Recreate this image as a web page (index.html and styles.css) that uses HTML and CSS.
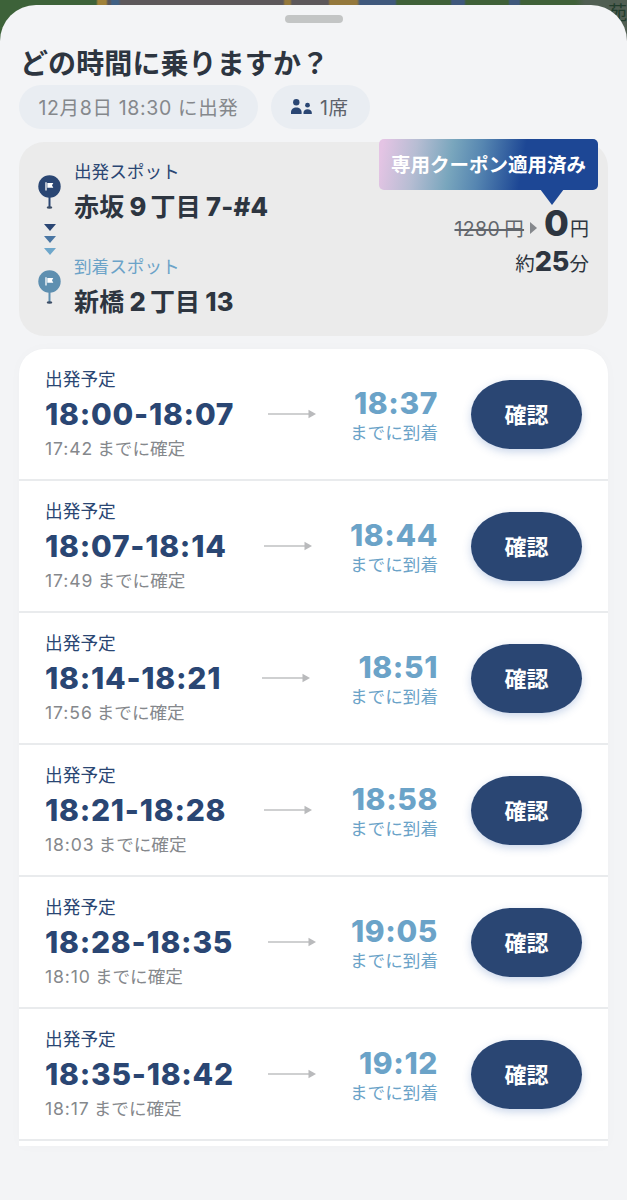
FILE: index.html
```html
<!DOCTYPE html>
<html lang="ja">
<head>
    <meta charset="UTF-8">
    <meta name="viewport" content="width=device-width, initial-scale=1.0">
    <title>どの時間に乗りますか?</title>
    <link rel="stylesheet" href="styles.css">
</head>
<body>
    <!-- Shared icons -->
    <svg class="icon-defs" width="0" height="0">
        <symbol id="arrow" viewBox="0 0 48 10">
            <path d="M0 5h42" stroke="#bfc0c2" stroke-width="1.6"/>
            <path d="M40.500 0.700L48 5l-7.500 4.300z" fill="#b9babc"/>
        </symbol>
        <symbol id="spot" viewBox="0 0 23 35">
            <path d="M11.500 20v12.500" stroke="currentColor" stroke-width="2"/>
            <ellipse cx="11.500" cy="32.500" rx="2.800" ry="1.300" fill="#3c4d66"/>
            <circle cx="11.500" cy="11.500" r="11.200" fill="currentColor"/>
            <path d="M8 7.300v8.200" stroke="#fff" stroke-width="1.300"/>
            <path d="M9.300 8h6l-1.300 2.300 1.300 2.400h-6z" fill="#fff"/>
        </symbol>
    </svg>

    <div class="map"><span class="map-label">苑</span></div>

    <div class="sheet">
        <div class="handle"></div>
        <h1>どの時間に乗りますか？</h1>

        <div class="conditions">
            <div class="pill pill-date">12月8日 18:30 に出発</div>
            <div class="pill pill-seat">
                <svg width="22" height="15" viewBox="0 0 22 15" fill="#2a4673">
                    <circle cx="5.300" cy="3.200" r="3.200"/>
                    <path d="M0 15v-1.800C0 10 2.300 8.400 5.300 8.400s5.300 1.600 5.300 4.800V15z"/>
                    <circle cx="16.500" cy="6.200" r="2.400"/>
                    <path d="M12.500 15v-1.300c0-2.200 1.600-3.500 4-3.500s4.300 1.300 4.300 3.500V15z"/>
                </svg>
                <span>1席</span>
            </div>
        </div>

        <!-- Route summary -->
        <div class="route">
            <div class="route-line">
                <svg class="spot-from" width="23" height="35"><use href="#spot"/></svg>
                <svg class="chevrons" width="12" height="32" viewBox="0 0 12 32">
                    <path d="M0 0h12L6 7z" fill="#2a4673"/>
                    <path d="M0 12h12l-6 7z" fill="#4a76a3"/>
                    <path d="M0 24h12l-6 7z" fill="#6ea7cb"/>
                </svg>
                <svg class="spot-to" width="23" height="35"><use href="#spot"/></svg>
            </div>
            <div class="route-spots">
                <div class="spot-label">出発スポット</div>
                <div class="spot-name">赤坂<span class="num">9</span>丁目<span class="num last">7-#4</span></div>
                <div class="spot-label to">到着スポット</div>
                <div class="spot-name">新橋<span class="num">2</span>丁目<span class="num last">13</span></div>
            </div>
            <div class="fare">
                <div class="price">
                    <span class="old-price">1280 円</span>
                    <svg width="7" height="12" viewBox="0 0 7 12"><path d="M0 0l7 6-7 6z" fill="#85888c"/></svg>
                    <span class="new-price">0</span><span class="unit">円</span>
                </div>
                <div class="duration">約<b>25</b>分</div>
            </div>
            <div class="coupon">専用クーポン適用済み</div>
        </div>

        <!-- Departure list -->
        <div class="trips">
            <div class="trip">
                <div class="depart">
                    <div class="depart-label">出発予定</div>
                    <div class="depart-time">18:00-18:07</div>
                    <div class="depart-note"><span>17:42</span>までに確定</div>
                </div>
                <div class="arrow"><svg width="48" height="10"><use href="#arrow"/></svg></div>
                <div class="arrive">
                    <div class="arrive-time">18:37</div>
                    <div class="arrive-note">までに到着</div>
                </div>
                <button class="confirm">確認</button>
            </div>
            <div class="trip">
                <div class="depart">
                    <div class="depart-label">出発予定</div>
                    <div class="depart-time">18:07-18:14</div>
                    <div class="depart-note"><span>17:49</span>までに確定</div>
                </div>
                <div class="arrow"><svg width="48" height="10"><use href="#arrow"/></svg></div>
                <div class="arrive">
                    <div class="arrive-time">18:44</div>
                    <div class="arrive-note">までに到着</div>
                </div>
                <button class="confirm">確認</button>
            </div>
            <div class="trip">
                <div class="depart">
                    <div class="depart-label">出発予定</div>
                    <div class="depart-time">18:14-18:21</div>
                    <div class="depart-note"><span>17:56</span>までに確定</div>
                </div>
                <div class="arrow"><svg width="48" height="10"><use href="#arrow"/></svg></div>
                <div class="arrive">
                    <div class="arrive-time">18:51</div>
                    <div class="arrive-note">までに到着</div>
                </div>
                <button class="confirm">確認</button>
            </div>
            <div class="trip">
                <div class="depart">
                    <div class="depart-label">出発予定</div>
                    <div class="depart-time">18:21-18:28</div>
                    <div class="depart-note"><span>18:03</span>までに確定</div>
                </div>
                <div class="arrow"><svg width="48" height="10"><use href="#arrow"/></svg></div>
                <div class="arrive">
                    <div class="arrive-time">18:58</div>
                    <div class="arrive-note">までに到着</div>
                </div>
                <button class="confirm">確認</button>
            </div>
            <div class="trip">
                <div class="depart">
                    <div class="depart-label">出発予定</div>
                    <div class="depart-time">18:28-18:35</div>
                    <div class="depart-note"><span>18:10</span>までに確定</div>
                </div>
                <div class="arrow"><svg width="48" height="10"><use href="#arrow"/></svg></div>
                <div class="arrive">
                    <div class="arrive-time">19:05</div>
                    <div class="arrive-note">までに到着</div>
                </div>
                <button class="confirm">確認</button>
            </div>
            <div class="trip">
                <div class="depart">
                    <div class="depart-label">出発予定</div>
                    <div class="depart-time">18:35-18:42</div>
                    <div class="depart-note"><span>18:17</span>までに確定</div>
                </div>
                <div class="arrow"><svg width="48" height="10"><use href="#arrow"/></svg></div>
                <div class="arrive">
                    <div class="arrive-time">19:12</div>
                    <div class="arrive-note">までに到着</div>
                </div>
                <button class="confirm">確認</button>
            </div>
        </div>
    </div>
</body>
</html>
```
FILE: styles.css
```css
:root {
    --navy: #2a4673;
    --sky: #6ba3c8;
    --text-color: #2d3540;
    --muted: #85888c;
    --background-color: #f3f4f6;
}

* {
    margin: 0;
    padding: 0;
    box-sizing: border-box;
}

body {
    position: relative;
    height: 1200px;
    padding-top: 5px;
    overflow: hidden;
    background: var(--background-color);
    color: var(--text-color);
    font-family: Inter, 'Noto Sans CJK JP', sans-serif;
}

svg {
    display: block;
    flex-shrink: 0;
}

.icon-defs {
    position: absolute;
}

/* Dimmed map behind the sheet */
.map {
    position: absolute;
    top: 0;
    left: 0;
    width: 100%;
    height: 50px;
    background: linear-gradient(90deg, #3d6239 0 96px, #a08139 98px 106px, #5a5558 108px 110px, #3f6084 112px 118px, #5d585b 121px 283px, #94783c 285px 290px, #5d585b 292px 328px, #94783c 330px 357px, #3f587c 360px 395px, #3f6038 397px 450px, #3f587c 452px 464px, #3f6038 466px 508px, #3f587c 510px 519px, #3f6038 521px 575px, #505e52 585px);
}

.map-label {
    position: absolute;
    top: 1px;
    right: 0;
    color: #213c2c;
    font-size: 19px;
    line-height: 26px;
}

.sheet {
    position: relative;
    height: 1195px;
    padding: 10px 19px 0;
    background: var(--background-color);
    border-radius: 36px 36px 0 0;
}

.handle {
    width: 58px;
    height: 8px;
    margin: 0 auto;
    border-radius: 4px;
    background: #c3c5c5;
}

h1 {
    margin: 21px 0 0 1px;
    font-size: 28px;
    line-height: 40px;
    font-weight: 700;
    letter-spacing: 0.100px;
}

.conditions {
    display: flex;
    gap: 13px;
    margin-top: 1px;
}

.pill {
    display: flex;
    align-items: center;
    height: 44px;
    padding-bottom: 1px;
    border-radius: 22px;
    background: #e9edf2;
    font-size: 19.500px;
    white-space: nowrap;
}

.pill-date {
    width: 239px;
    justify-content: center;
    color: var(--muted);
    letter-spacing: 0.650px;
}

.pill-seat {
    width: 99px;
    padding-left: 20px;
    gap: 7px;
    color: #5d636b;
    letter-spacing: 0.600px;
}

.route {
    position: relative;
    display: flex;
    height: 194px;
    margin-top: 13px;
    padding: 18px 19px 0;
    border-radius: 25px;
    background: #ebebeb;
}

.route-line {
    display: flex;
    flex-direction: column;
    align-items: center;
    padding-top: 15px;
}

.spot-from {
    color: var(--navy);
}

.chevrons {
    margin: 14px 0;
}

.spot-to {
    color: #5e8fb0;
}

.route-spots {
    flex: 1;
    margin-left: 13px;
}

.spot-label {
    font-size: 17.600px;
    line-height: 24px;
    color: var(--navy);
}

.spot-label.to {
    color: var(--sky);
}

.spot-name {
    margin: 11px 0 36px;
    font-size: 25px;
    line-height: 24px;
    font-weight: 700;
    letter-spacing: 0.200px;
}

.num {
    margin: 0 4px 0 5px;
    font-size: 25.500px;
    font-weight: 800;
}

.num.last {
    margin-right: 0;
    letter-spacing: 0.300px;
}

.fare {
    padding-top: 42px;
}

.price {
    display: flex;
    align-items: center;
    justify-content: flex-end;
    height: 42px;
}

.old-price {
    color: #62666c;
    font-size: 19.500px;
    letter-spacing: 0.400px;
    word-spacing: -2px;
    margin-right: 6px;
    padding-top: 8px;
    text-decoration: line-through;
    text-decoration-thickness: 1.500px;
}

.price svg {
    margin-top: 10px;
}

.new-price {
    margin: 0 1px 0 7px;
    font-size: 36px;
    line-height: 42px;
    font-weight: 800;
}

.unit {
    padding-top: 9px;
    font-size: 19px;
}

.duration {
    text-align: right;
    font-size: 19.500px;
    line-height: 36px;
}

.duration b {
    font-size: 27px;
    font-weight: 800;
}

.coupon {
    position: absolute;
    top: -3px;
    right: 10px;
    width: 219px;
    height: 51px;
    border-radius: 5px;
    background: linear-gradient(100deg, #e4c4e4 2%, #b7bdd3 17%, #79a6bd 33%, #5686b1 46%, #1d4795 65%);
    color: #fff;
    font-size: 19.500px;
    font-weight: 700;
    line-height: 53px;
    text-align: center;
    white-space: nowrap;
}

.coupon::after {
    content: '';
    position: absolute;
    top: 50px;
    right: 34px;
    border: solid transparent;
    border-width: 16px 12px 0;
    border-top-color: #1d4795;
}

.trips {
    height: 797px;
    margin-top: 13px;
    border-radius: 25px 25px 0 0;
    background: #fff;
    box-shadow: 0 0 14px rgba(0, 0, 0, 0.02);
}

.trip {
    display: flex;
    align-items: center;
    height: 132px;
    padding: 0 26px;
    border-bottom: 2px solid #e9ebed;
}

.depart {
    margin-top: 2px;
}

.depart-label {
    font-size: 17.700px;
    line-height: 20px;
    color: var(--navy);
}

.depart-time {
    font-size: 30px;
    line-height: 48px;
    font-weight: 800;
    letter-spacing: 0.750px;
    color: var(--navy);
}

.depart-note {
    font-size: 17.600px;
    line-height: 22px;
    color: var(--muted);
}

.depart-note span {
    margin-right: 4px;
    letter-spacing: 0.900px;
}

.arrow {
    flex: 1;
    display: flex;
    justify-content: center;
}

.arrive {
    width: 88px;
    margin-top: 2px;
    margin-right: 33px;
    color: var(--sky);
    text-align: right;
    white-space: nowrap;
}

.arrive-time {
    font-size: 30px;
    line-height: 36px;
    font-weight: 800;
    letter-spacing: 0.600px;
}

.arrive-note {
    font-size: 17.600px;
    line-height: 24px;
}

.confirm {
    width: 111px;
    height: 69px;
    padding-bottom: 2px;
    border: none;
    border-radius: 40px / 34.500px;
    background: var(--navy);
    box-shadow: 0 3px 9px rgba(42, 90, 170, 0.25);
    color: #fff;
    font: 700 22px 'Noto Sans CJK JP', sans-serif;
    cursor: pointer;
}
```
